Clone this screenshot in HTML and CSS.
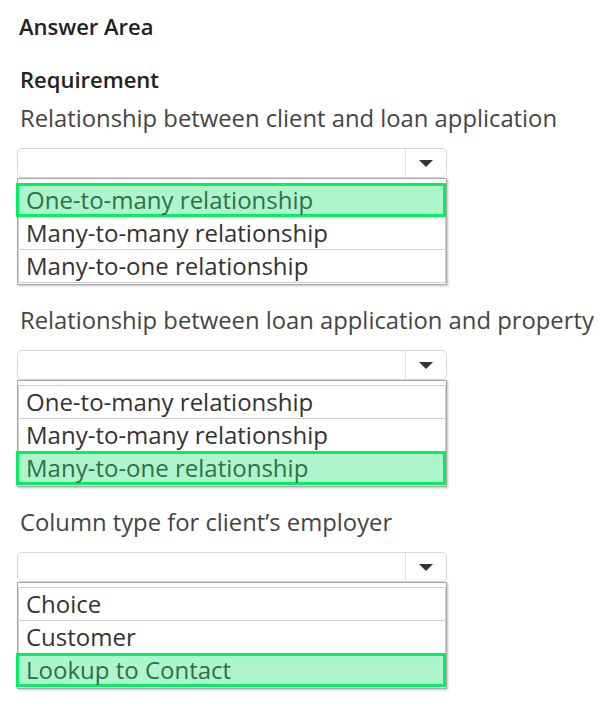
FILE: index.html
```html
<!DOCTYPE html>
<html lang="en">
<head>
    <meta charset="UTF-8">
    <meta name="viewport" content="width=device-width, initial-scale=1.0">
    <title>Answer Area</title>
    <link rel="stylesheet" href="styles.css">
</head>
<body>
    <div class="answer-area">
        <h1 class="title">Answer Area</h1>
        <h2 class="heading">Requirement</h2>

        <div class="question">
            <p class="question-label">Relationship between client and loan application</p>
            <div class="select">
                <span class="select-value"></span>
                <span class="select-arrow"></span>
            </div>
            <ul class="options">
                <li class="option selected">One-to-many relationship</li>
                <li class="option">Many-to-many relationship</li>
                <li class="option">Many-to-one relationship</li>
            </ul>
        </div>

        <div class="question">
            <p class="question-label">Relationship between loan application and property</p>
            <div class="select">
                <span class="select-value"></span>
                <span class="select-arrow"></span>
            </div>
            <ul class="options">
                <li class="option">One-to-many relationship</li>
                <li class="option">Many-to-many relationship</li>
                <li class="option selected">Many-to-one relationship</li>
            </ul>
        </div>

        <div class="question">
            <p class="question-label">Column type for client’s employer</p>
            <div class="select">
                <span class="select-value"></span>
                <span class="select-arrow"></span>
            </div>
            <ul class="options">
                <li class="option">Choice</li>
                <li class="option">Customer</li>
                <li class="option selected">Lookup to Contact</li>
            </ul>
        </div>
    </div>
</body>
</html>
```

FILE: styles.css
```css
body {
    font-family: "Open Sans", "Noto Sans", sans-serif;
    background: #fff;
    color: #333;
    margin: 0;
    padding: 0;
}

.answer-area {
    padding: 11px 0 0 17px;
}

.title {
    font-size: 22px;
    font-weight: 600;
    color: #222;
    margin: 0 0 0 2px;
    line-height: 30px;
}

.heading {
    font-size: 22px;
    font-weight: 600;
    color: #222;
    margin: 23px 0 9px 3px;
    line-height: 30px;
}

.question {
    width: 430px;
    margin-bottom: 20px;
}

.question-label {
    font-size: 23.8px;
    color: #454545;
    margin: 0 0 15px 3px;
    line-height: 30px;
    white-space: nowrap;
}

/* closed dropdown with the arrow button on the right */
.select {
    display: flex;
    height: 28px;
    border: 1px solid #d6d6d6;
    border-radius: 5px;
    background: #fff;
}

.select-value {
    flex: 1;
}

.select-arrow {
    width: 40px;
    border-left: 1px solid #e2e2e2;
    display: flex;
    align-items: center;
    justify-content: center;
}

.select-arrow::before {
    content: "";
    border-left: 7px solid transparent;
    border-right: 7px solid transparent;
    border-top: 7px solid #333;
}

.options {
    list-style: none;
    margin: 0;
    padding: 4px 0 1px;
    border: 1px solid #a8a8a8;
    box-shadow: 1px 1px 2px rgba(0, 0, 0, 0.25);
    background: #fff;
}

.option {
    font-size: 24px;
    line-height: 32px;
    padding: 0 7px;
    border: 1px solid #cfcfcf;
    margin-top: -1px;
    color: #333;
    white-space: nowrap;
}

.option:first-child {
    margin-top: 0;
}

.option.selected {
    background: #aef5cb;
    border: 3px solid #00f060;
    line-height: 28px;
    margin-left: -2px;
    padding-left: 7px;
    color: #2e7048;
    position: relative;
}
```
